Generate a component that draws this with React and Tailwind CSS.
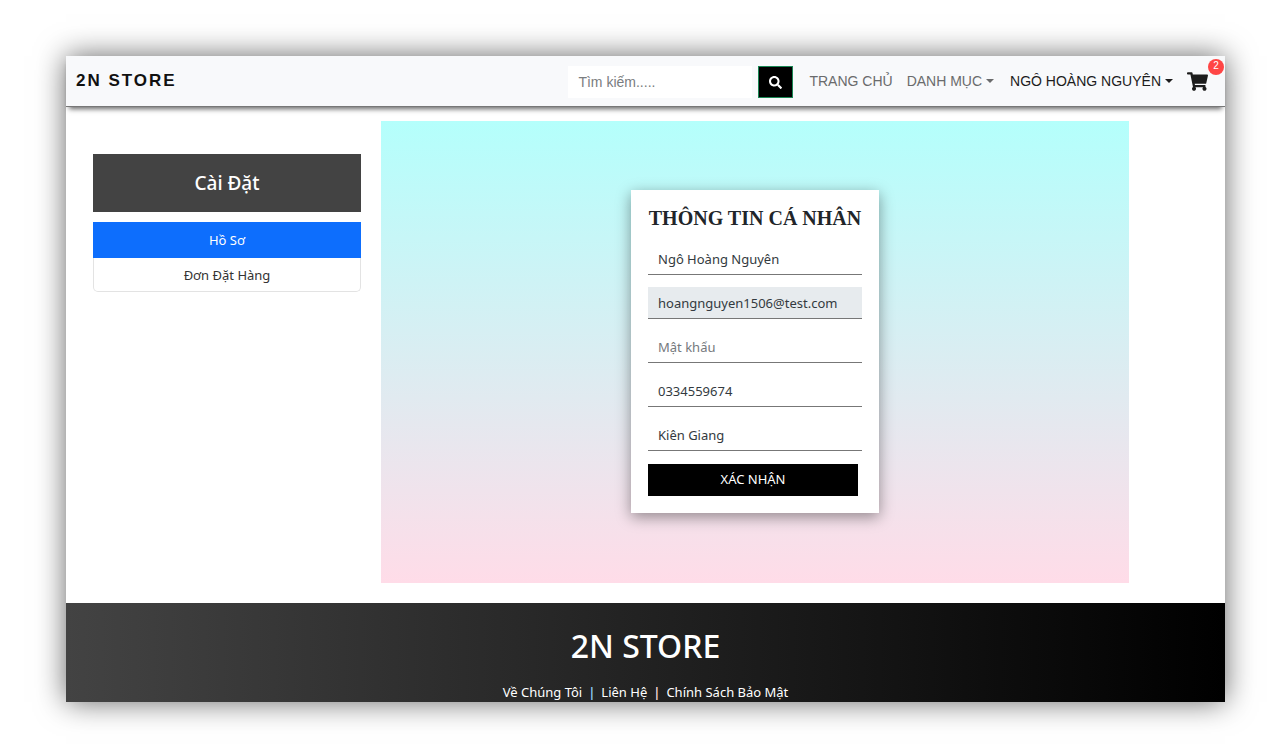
import { FaSearch, FaShoppingCart } from "react-icons/fa";

const fields = [
  { id: "name", label: "Họ tên", type: "text", value: "Ngô Hoàng Nguyên" },
  { id: "email", label: "Email", type: "email", value: "hoangnguyen1506@test.com", disabled: true },
  { id: "password", label: "Mật khẩu", type: "password", value: "", placeholder: "Mật khẩu" },
  { id: "phone", label: "Số điện thoại", type: "tel", value: "0334559674" },
  { id: "address", label: "Địa chỉ", type: "text", value: "Kiên Giang" },
];

function Caret() {
  return <span className="border-x-4 border-t-4 border-x-transparent border-t-current" />;
}

function Header() {
  return (
    <header className="relative flex h-[51px] items-center border-b border-[#777] bg-[#f8f9fb] pr-[17px] pl-[10px] font-['Liberation_Sans',Arial,sans-serif] text-sm shadow-[0_5px_5px_-3px_rgba(0,0,0,0.6)]">
      <a href="#home" className="mr-auto text-[17px] font-bold tracking-[2px] text-[#111]">2N STORE</a>
      <form className="flex gap-[6px] pt-[2px]" onSubmit={(e) => e.preventDefault()}>
        <input
          type="search"
          aria-label="Tìm kiếm"
          placeholder="Tìm kiếm....."
          className="h-8 w-[184px] bg-white px-[10px] placeholder:text-[#7a7d80] focus:outline-none"
        />
        <button type="submit" aria-label="Tìm" className="flex h-8 w-[35px] items-center justify-center border border-[#198754] bg-black text-white">
          <FaSearch className="size-[13px]" />
        </button>
      </form>
      <nav className="ml-4 flex items-center whitespace-nowrap text-[#6a6b6c]">
        <a href="#home">TRANG CHỦ</a>
        <button type="button" className="ml-[14px] flex items-center gap-1">DANH MỤC <Caret /></button>
        <button type="button" className="ml-4 flex items-center gap-1 text-[#1c1c1c]">NGÔ HOÀNG NGUYÊN <Caret /></button>
        <a href="#cart" aria-label="Giỏ hàng" className="relative ml-[14px] text-[#1c1c1c]">
          <FaShoppingCart className="size-[21px]" />
          <span className="absolute -top-3 -right-4 flex size-4 items-center justify-center rounded-full bg-[#ff4545] text-[10px] text-white">2</span>
        </a>
      </nav>
    </header>
  );
}

function Sidebar() {
  return (
    <aside className="w-[268px] shrink-0 pt-[33px] text-center">
      <h2 className="bg-[#434343] py-[15px] text-[19px] leading-7 font-medium text-white">Cài Đặt</h2>
      <nav className="mt-[10px] text-[13px] leading-5">
        <a href="#profile" className="block bg-[#0d6efd] py-2 text-white">Hồ Sơ</a>
        <a href="#orders" className="block rounded-b-[5px] border border-t-0 border-[#e3e3e3] pt-[7px] pb-[6px] text-[#333]">Đơn Đặt Hàng</a>
      </nav>
    </aside>
  );
}

function ProfileForm() {
  return (
    <form
      onSubmit={(e) => e.preventDefault()}
      className="flex w-[248px] flex-col gap-3 bg-white px-[17px] pt-4 pb-[17px] shadow-[0_4px_14px_rgba(0,0,0,0.4)]"
    >
      <h1 className="mb-px text-center font-['Liberation_Serif',serif] text-xl leading-6 font-bold whitespace-nowrap text-[#212529]">THÔNG TIN CÁ NHÂN</h1>
      {fields.map((f) => (
        <input
          key={f.id}
          id={f.id}
          aria-label={f.label}
          type={f.type}
          defaultValue={f.value}
          placeholder={f.placeholder}
          disabled={f.disabled}
          className="block h-8 w-full border-b border-[#777] bg-white px-[10px] text-[13px] text-[#333a40] placeholder:text-[#75797d] focus:outline-none disabled:bg-[#e7ebee]"
        />
      ))}
      <button type="submit" className="mt-px mr-1 h-8 bg-black text-[13px] text-white">XÁC NHẬN</button>
    </form>
  );
}

function Footer() {
  return (
    <footer className="flex h-[99px] flex-col items-center overflow-hidden bg-linear-to-r/srgb from-[#434343] to-black pt-[23px] text-white">
      <p className="text-[32px] leading-10 font-medium">2N STORE</p>
      <nav className="mt-4 flex gap-[6px] text-[13px] leading-5 whitespace-nowrap">
        <a href="#about">Về Chúng Tôi</a>
        <span className="font-semibold text-[#8fd0f8]">|</span>
        <a href="#contact">Liên Hệ</a>
        <span className="font-semibold text-[#fbdcd8]">|</span>
        <a href="#privacy">Chính Sách Bảo Mật</a>
      </nav>
    </footer>
  );
}

export default function App() {
  return (
    <div className="bg-white pt-14 pr-[62px] pb-[47px] pl-[66px] font-['Noto_Sans',sans-serif]">
      <div className="bg-white shadow-[0_0_28px_rgba(0,0,0,0.6)]">
        <Header />
        <main className="flex gap-5 pt-[14px] pr-24 pb-5 pl-[27px]">
          <Sidebar />
          <section className="flex min-h-[462px] flex-1 items-center justify-center bg-linear-to-b/srgb from-[#b4fffc] to-[#ffdce8] pb-px">
            <ProfileForm />
          </section>
        </main>
        <Footer />
      </div>
    </div>
  );
}
